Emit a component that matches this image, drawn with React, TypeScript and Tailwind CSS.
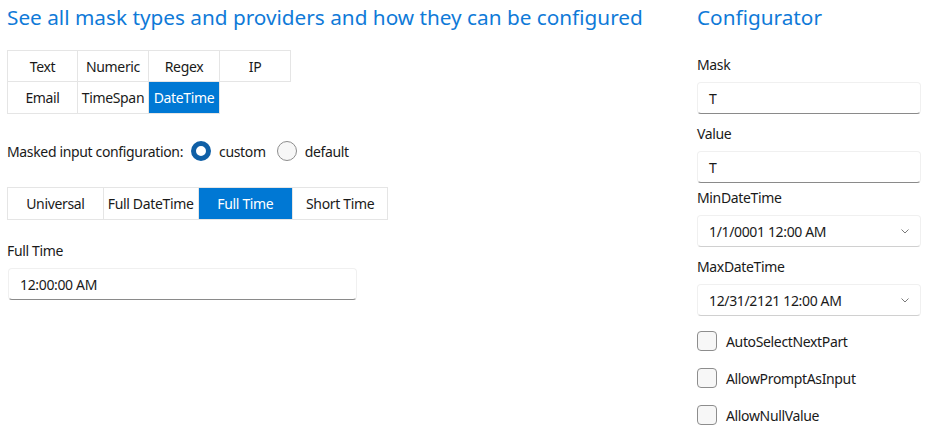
import React, { useState } from "react";

// first tab group: mask types
const MASK_TYPES = ["Text", "Numeric", "Regex", "IP", "Email", "TimeSpan", "DateTime"];
// second tab group: DateTime presets
const PRESETS = ["Universal", "Full DateTime", "Full Time", "Short Time"];

const Chevron = () => (
  <svg width="12" height="12" viewBox="0 0 12 12" className="text-[#7a7a7a]">
    <path d="M2.5 4.5 L6 8 L9.5 4.5" fill="none" stroke="currentColor" strokeWidth="1" />
  </svg>
);

const TextField = ({ value }: { value: string }) => (
  <div className="h-[32px] w-full flex items-center px-[11px] bg-white border border-[#f0f0f0] border-b-[#8a8a8a] rounded-[4px] text-[14px] text-[#1a1a1a]">
    {value}
  </div>
);

const Combo = ({ value }: { value: string }) => (
  <div className="h-[32px] w-full flex items-center justify-between pl-[11px] pr-[9px] bg-white border border-[#f0f0f0] border-b-[#d0d0d0] rounded-[4px] text-[14px] text-[#1a1a1a]">
    <span>{value}</span>
    <Chevron />
  </div>
);

const CheckRow = ({ label }: { label: string }) => (
  <div className="flex items-center h-[20px] gap-[9px]">
    <span className="w-[20px] h-[20px] rounded-[4px] border border-[#8d8d8d] bg-[#f7f7f7]" />
    <span className="text-[14px] text-[#1a1a1a]">{label}</span>
  </div>
);

const Radio = ({ on }: { on: boolean }) =>
  on ? (
    <span className="w-[20px] h-[20px] rounded-full border-[5px] border-[#0f5fa6] bg-white" />
  ) : (
    <span className="w-[20px] h-[20px] rounded-full border border-[#8d8d8d] bg-[#f7f7f7]" />
  );

const App = () => {
  const [maskType, setMaskType] = useState("DateTime");
  const [preset, setPreset] = useState("Full Time");
  const [mode, setMode] = useState("custom");

  return (
    <div
      className="flex w-[930px] h-[440px] bg-white text-[#1a1a1a] pl-[7px] tracking-[-0.35px]"
      style={{ fontFamily: '"Noto Sans", "Open Sans", sans-serif' }}
    >
      {/* left column */}
      <div className="w-[690px] flex flex-col">
        <h1 className="text-[20.75px] leading-[28px] mt-[3px] text-[#0f7ad8] tracking-[0px]">
          See all mask types and providers and how they can be configured
        </h1>

        {/* mask type tabs */}
        <div className="grid grid-cols-[repeat(4,71px)] mt-[19px] w-[285px]">
          {MASK_TYPES.map((t, i) => (
            <button
              key={t}
              onClick={() => setMaskType(t)}
              className={
                "h-[32px] text-[14px] flex items-center justify-center border-r border-b border-[#e5e5e5] " +
                (i < 4 ? "border-t " : "") +
                (i % 4 === 0 ? "border-l " : "") +
                (maskType === t ? "bg-[#0078d4] text-white border-[#0078d4]" : "bg-white text-[#1a1a1a]")
              }
            >
              {t}
            </button>
          ))}
        </div>

        {/* configuration radios */}
        <div className="flex items-center h-[20px] mt-[27px] text-[14px]">
          <span>Masked input configuration:</span>
          <button onClick={() => setMode("custom")} className="flex items-center ml-[8px] gap-[8px]">
            <Radio on={mode === "custom"} />
            <span>custom</span>
          </button>
          <button onClick={() => setMode("default")} className="flex items-center ml-[11px] gap-[8px]">
            <Radio on={mode === "default"} />
            <span>default</span>
          </button>
        </div>

        {/* preset tabs */}
        <div className="flex mt-[26px] w-[381px] border border-[#e5e5e5]">
          {PRESETS.map((p, i) => (
            <button
              key={p}
              onClick={() => setPreset(p)}
              className={
                "h-[31px] w-[95px] text-[14px] flex items-center justify-center " +
                (i > 0 ? "border-l border-[#e5e5e5] " : "") +
                (preset === p ? "bg-[#0078d4] text-white" : "bg-white text-[#1a1a1a]")
              }
            >
              {p}
            </button>
          ))}
        </div>

        <div className="text-[14px] leading-[20px] mt-[21px]">Full Time</div>
        <div className="w-[349px] ml-[1px] mt-[7px]">
          <TextField value="12:00:00 AM" />
        </div>
      </div>

      {/* right column: configurator */}
      <div className="w-[224px] flex flex-col">
        <h2 className="text-[20.75px] leading-[28px] mt-[3px] text-[#0f7ad8] tracking-[0px]">Configurator</h2>

        <div className="text-[14px] leading-[20px] mt-[24px]">Mask</div>
        <div className="mt-[7px]">
          <TextField value="T" />
        </div>

        <div className="text-[14px] leading-[20px] mt-[10px]">Value</div>
        <div className="mt-[7px]">
          <TextField value="T" />
        </div>

        <div className="text-[14px] leading-[20px] mt-[5px]">MinDateTime</div>
        <div className="mt-[7px]">
          <Combo value="1/1/0001 12:00 AM" />
        </div>

        <div className="text-[14px] leading-[20px] mt-[10px]">MaxDateTime</div>
        <div className="mt-[7px]">
          <Combo value="12/31/2121 12:00 AM" />
        </div>

        <div className="flex flex-col gap-[17px] mt-[15px]">
          <CheckRow label="AutoSelectNextPart" />
          <CheckRow label="AllowPromptAsInput" />
          <CheckRow label="AllowNullValue" />
        </div>
      </div>
    </div>
  );
};

export default App;
